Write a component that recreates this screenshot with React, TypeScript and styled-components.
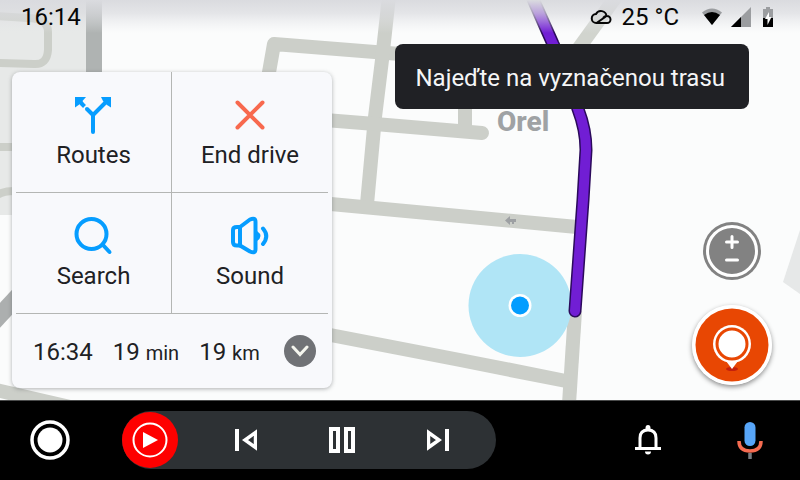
import React from "react";
import styled, { createGlobalStyle } from "styled-components";

const GlobalStyle = createGlobalStyle`
  *, *::before, *::after { box-sizing: border-box; }
  body { margin: 0; background: #000; font-family: Roboto, "Liberation Sans", sans-serif; }
  button { font: inherit; color: inherit; background: none; border: 0; padding: 0; cursor: pointer; }
  svg { display: block; }
`;

const Screen = styled.div`
  min-height: 100vh;
  display: flex;
  flex-direction: column;
`;

const Main = styled.main`
  position: relative;
  isolation: isolate;
  flex: 1;
  display: flex;
  flex-direction: column;
  background: #fbfcfc;
`;

const MapCanvas = styled.svg`
  position: absolute;
  inset: 0;
  width: 100%;
  height: 100%;
  z-index: -1;
`;

const StatusBar = styled.header`
  display: flex;
  align-items: center;
  justify-content: space-between;
  height: 34px;
  padding: 0 27px 0 21px;
  font-size: 24px;
  line-height: 32px;
  color: #060606;
`;

const StatusGroup = styled.div<{ $gap: number }>`
  display: flex;
  align-items: center;
  gap: ${(p) => p.$gap}px;
`;

const Content = styled.div`
  flex: 1;
  display: flex;
  align-items: stretch;
  justify-content: space-between;
  padding: 10px 28px 12px 12px;
`;

const Panel = styled.section`
  flex: 0 0 320px;
  align-self: flex-start;
  margin-top: 28px;
  padding: 0 4px;
  border-radius: 8px;
  background: #f8f9fc;
  color: #202124;
  box-shadow: 0 1px 4px rgba(60, 64, 67, 0.4);
`;

const ActionGrid = styled.div`
  display: grid;
  grid-template-columns: 1fr 1fr;
`;

const Action = styled.button`
  display: flex;
  flex-direction: column;
  align-items: center;
  justify-content: center;
  gap: 6px;
  height: 121px;
  border-bottom: 1px solid #b4b6b4;
  font-size: 24px;
  line-height: 28px;

  &:nth-child(odd) {
    border-right: 1px solid #b4b6b4;
  }
`;

const TripRow = styled.div`
  display: flex;
  align-items: center;
  gap: 20px;
  height: 74px;
  padding: 2px 12px 0 17px;
  font-size: 24px;
  line-height: 28px;
`;

const Unit = styled.span`
  font-size: 20px;
`;

const Collapse = styled.button`
  display: grid;
  place-items: center;
  width: 32px;
  height: 32px;
  margin: 0 0 2px auto;
  border-radius: 50%;
  background: #707276;
`;

const Side = styled.div`
  flex: 1;
  display: flex;
  flex-direction: column;
  align-items: flex-end;
`;

const Toast = styled.div`
  margin-right: 23px;
  padding: 20px 24px 17px 20px;
  border-radius: 8px;
  background: #202125;
  color: #f5f6f7;
  font-size: 24px;
  line-height: 28px;
  white-space: nowrap;
`;

const MapControls = styled.div`
  display: flex;
  flex-direction: column;
  align-items: center;
  gap: 25px;
  margin-top: auto;
  padding-bottom: 3px;
`;

const RoundButton = styled.button<{ $raised?: boolean }>`
  border-radius: 50%;
  box-shadow: ${(p) => (p.$raised ? "0 2px 5px rgba(0, 0, 0, 0.45)" : "none")};
`;

const NavBar = styled.nav`
  display: flex;
  align-items: center;
  height: 80px;
  padding: 0 30px 2px;
  border-top: 1px solid #4a4b4b;
  background: #000;
  color: #fff;
`;

const NavButton = styled.button`
  display: grid;
  place-items: center;
  width: 40px;
  height: 40px;
`;

const MediaPill = styled.div`
  display: flex;
  align-items: center;
  height: 58px;
  margin-left: 52px;
  padding-right: 10px;
  border-radius: 29px;
  background: #2d3134;
`;

const MediaApp = styled.button`
  width: 56px;
  height: 56px;
  margin-right: 20px;
`;

const MediaButton = styled.button`
  display: grid;
  place-items: center;
  width: 96px;
  height: 58px;
`;

const NavEnd = styled.div`
  display: flex;
  gap: 62px;
  margin-left: auto;
`;

function RoadMap() {
  return (
    <MapCanvas viewBox="0 0 800 400" preserveAspectRatio="xMinYMin slice" aria-hidden="true">
      <defs>
        <linearGradient id="shade" x1="0" y1="0" x2="0" y2="1">
          <stop offset="0" stopColor="#dadbdf" />
          <stop offset="0.4" stopColor="#dadbdf" stopOpacity="0.7" />
          <stop offset="1" stopColor="#e6e7ea" stopOpacity="0" />
        </linearGradient>
      </defs>
      <rect width="800" height="400" fill="#fbfcfc" />
      <path d="M0 0H90V215H0Z" fill="#e7e9e8" />
      <path d="M800 230L783 282L800 294Z" fill="#e6e8e8" />
      <g fill="none" stroke="#cccfc9" strokeWidth="14" strokeLinejoin="round">
        <g strokeWidth="8">
          <path d="M-4 16L28 18Q48 18 48 32V50Q47 65 34 64L-4 63" />
          <path d="M-4 147H14M-4 196Q2 191 14 191" />
        </g>
        <path d="M262 112L274 44L400 54L480 61" />
        <path d="M389 -4L382 60L375 117L367 204" />
        <path d="M300 118L375 124L482 133" strokeLinecap="round" />
        <path d="M465 100V130" />
        <path d="M320 203L577 227" />
        <path d="M320 333L460 360L566 381" />
        <path d="M575 311L569 404" />
        <path d="M618 -6L576 52" stroke="#d1d4ce" />
        <path d="M-4 390L70 407" />
      </g>
      <path d="M94 -4V90" stroke="#afb3b2" strokeWidth="16" />
      <path d="M-10 326L30 283" stroke="#acafaf" strokeWidth="17" />
      <path d="M505 220.500L510 216V219H516V222H514V224H512V222H510V225Z" fill="#9da0a3" />
      <text x="497" y="131" fontFamily="Roboto, sans-serif" fontSize="28" fontWeight="800" fill="#9fa2a4">
        Orel
      </text>
      <circle cx="520" cy="305.500" r="51.500" fill="#b0e5f6" />
      <g fill="none" strokeLinecap="round" strokeLinejoin="round">
        <path d="M529 -10L553 44Q570 80 578 109Q586 130 586 150L583 200L575 311" stroke="#2b0a5b" strokeWidth="13" />
        <path d="M529 -10L553 44Q570 80 578 109Q586 130 586 150L583 200L575 311" stroke="#711ed4" strokeWidth="10" />
      </g>
      <circle cx="520" cy="305.500" r="11.500" fill="#fff" />
      <circle cx="520" cy="305.500" r="9" fill="#039dff" />
      <rect width="800" height="33" fill="url(#shade)" />
    </MapCanvas>
  );
}

const RoutesIcon = () => (
  <svg width="40" height="40" viewBox="0 0 40 40" fill="none" stroke="#069dff" strokeWidth="4">
    <path d="M19 37V20L32 7" strokeLinejoin="round" strokeLinecap="round" />
    <path d="M19 20L13 14" strokeLinecap="round" />
    <path d="M10.500 11.500L7 8" />
    <path d="M1 2H12L8.500 6L10 9L8 11L6 9L1 12.500Z" fill="#069dff" stroke="none" />
    <path d="M37 2H27L29 6L33 10L37 12.500Z" fill="#069dff" stroke="none" />
  </svg>
);

const CrossIcon = () => (
  <svg width="40" height="40" viewBox="0 0 40 40" fill="none" stroke="#f8694e" strokeWidth="4" strokeLinecap="round">
    <path d="M7.500 7.500L32.500 32.500M32.500 7.500L7.500 32.500" />
  </svg>
);

const SearchIcon = () => (
  <svg width="40" height="40" viewBox="0 0 40 40" fill="none" stroke="#069dff" strokeWidth="4" strokeLinecap="round">
    <circle cx="17.500" cy="18" r="15" />
    <path d="M29 29L35.500 36" />
  </svg>
);

const SoundIcon = () => (
  <svg width="40" height="40" viewBox="0 0 40 40" fill="none" stroke="#069dff" strokeWidth="4" strokeLinejoin="round" strokeLinecap="round">
    <path d="M10 11H7Q3 11 3 14V26Q3 29.500 7 29.500H10Z" />
    <path d="M10 11L20 3.500Q25.500 1 25.500 6V33Q25.500 38 20 35.500L10 29.500" />
    <path d="M27 15Q34 20 27 25Z" fill="#069dff" stroke="none" />
    <path d="M33 12.500Q39.500 20 33 28" />
  </svg>
);

const CloudIcon = () => (
  <svg width="22" height="16" viewBox="0 0 22 16" fill="none" stroke="#060606" strokeWidth="2">
    <path d="M6.500 14H17A3.500 3.500 0 0 0 17 7Q14 7 13 9.500M16.500 7A5.600 5.600 0 0 0 6 5A4.500 4.500 0 0 0 6.500 14Z" />
  </svg>
);

const WifiIcon = () => (
  <svg width="22" height="18" viewBox="0 0 22 18">
    <path d="M1 4.500Q11-3.500 21 4.500L11 17Z" fill="#9b9da0" />
    <path d="M3 7Q11 1 19 7L11 17Z" fill="#000" />
  </svg>
);

const SignalIcon = () => (
  <svg width="20" height="20" viewBox="0 0 20 20">
    <path d="M20 0V20H0Z" fill="#9b9da0" />
    <path d="M10 10V20H0Z" fill="#000" />
  </svg>
);

const BatteryIcon = () => (
  <svg width="10" height="20" viewBox="0 0 10 20">
    <path d="M3 0H7V2H10V11H0V2H3Z" fill="#9b9da0" />
    <path d="M0 11H10V20H0Z" fill="#000" />
    <path d="M6 5L2 12H4.500V18L8.500 10H6Z" fill="#fff" />
  </svg>
);

export default function App() {
  return (
    <Screen>
      <GlobalStyle />
      <Main>
        <RoadMap />
        <StatusBar>
          <time>16:14</time>
          <StatusGroup $gap={22}>
            <StatusGroup $gap={9}>
              <CloudIcon />
              <span>25 °C</span>
            </StatusGroup>
            <StatusGroup $gap={12}>
              <StatusGroup $gap={8}>
                <WifiIcon />
                <SignalIcon />
              </StatusGroup>
              <BatteryIcon />
            </StatusGroup>
          </StatusGroup>
        </StatusBar>
        <Content>
          <Panel>
            <ActionGrid>
              <Action><RoutesIcon />Routes</Action>
              <Action><CrossIcon />End drive</Action>
              <Action><SearchIcon />Search</Action>
              <Action><SoundIcon />Sound</Action>
            </ActionGrid>
            <TripRow>
              <time>16:34</time>
              <span>19 <Unit>min</Unit></span>
              <span>19 <Unit>km</Unit></span>
              <Collapse aria-label="Collapse">
                <svg width="18" height="12" viewBox="0 0 18 12" fill="none" stroke="#f4f5ee" strokeWidth="3" strokeLinecap="round">
                  <path d="M2 2L9 9.500L16 2" />
                </svg>
              </Collapse>
            </TripRow>
          </Panel>
          <Side>
            <Toast role="status">Najeďte na vyznačenou trasu</Toast>
            <MapControls>
              <RoundButton aria-label="Zoom">
                <svg width="58" height="58" viewBox="0 0 58 58">
                  <circle cx="29" cy="29" r="29" fill="#828282" />
                  <circle cx="29" cy="29" r="24.500" fill="none" stroke="#fff" strokeWidth="3" />
                  <path d="M23.500 20H34.500M29 14.500V25.500M23.500 38H34.500" stroke="#fff" strokeWidth="3" strokeLinecap="round" />
                </svg>
              </RoundButton>
              <RoundButton $raised aria-label="Report">
                <svg width="80" height="80" viewBox="0 0 80 80">
                  <circle cx="40" cy="40" r="40" fill="#fff" />
                  <circle cx="40" cy="40" r="36.500" fill="#e84703" />
                  <ellipse cx="40" cy="64" rx="6" ry="2" fill="#c4200c" />
                  <path d="M34 56L40 64L46 56Z" fill="#fff" />
                  <circle cx="40" cy="39" r="19" fill="#fff" />
                  <circle cx="40" cy="39" r="15" fill="none" stroke="#e84703" strokeWidth="3" />
                </svg>
              </RoundButton>
            </MapControls>
          </Side>
        </Content>
      </Main>
      <NavBar>
        <NavButton aria-label="Home">
          <svg width="40" height="40" viewBox="0 0 40 40" fill="#fff">
            <circle cx="20" cy="20" r="18" fill="none" stroke="#fff" strokeWidth="3.500" />
            <circle cx="20" cy="20" r="12.500" />
          </svg>
        </NavButton>
        <MediaPill>
          <MediaApp aria-label="YouTube Music">
            <svg width="56" height="56" viewBox="0 0 56 56">
              <circle cx="28" cy="28" r="28" fill="#fe0000" />
              <circle cx="28" cy="28" r="16.500" fill="none" stroke="#fff" strokeWidth="2" />
              <path d="M21 20L36 28L21 36Z" fill="#fff" />
            </svg>
          </MediaApp>
          <MediaButton aria-label="Previous">
            <svg width="22" height="22" viewBox="0 0 22 22" fill="none" stroke="#fff" strokeWidth="3.500">
              <path d="M2 0V22" strokeWidth="4" />
              <path d="M20.500 3.500V18.500L10 11Z" />
            </svg>
          </MediaButton>
          <MediaButton aria-label="Pause">
            <svg width="26" height="26" viewBox="0 0 26 26" fill="none" stroke="#fff" strokeWidth="4">
              <path d="M2 2H9V24H2ZM17 2H24V24H17Z" />
            </svg>
          </MediaButton>
          <MediaButton aria-label="Next">
            <svg width="22" height="22" viewBox="0 0 22 22" fill="none" stroke="#fff" strokeWidth="3.500">
              <path d="M20 0V22" strokeWidth="4" />
              <path d="M1.500 3.500V18.500L12 11Z" />
            </svg>
          </MediaButton>
        </MediaPill>
        <NavEnd>
          <NavButton aria-label="Notifications">
            <svg width="26" height="30" viewBox="0 0 26 30" fill="#fff">
              <path d="M5 24V13Q5 5 13 5Q21 5 21 13V24" fill="none" stroke="#fff" strokeWidth="3" />
              <path d="M10.500 5V3Q10.500 0 13 0T15.500 3V5ZM0 22H26V25H0ZM10 26.500H16Q16 29.500 13 29.500T10 26.500Z" />
            </svg>
          </NavButton>
          <NavButton aria-label="Voice assistant">
            <svg width="26" height="38" viewBox="0 0 26 38">
              <rect x="7.500" y="1" width="11" height="24" rx="5.500" fill="#57a5f8" />
              <path d="M2 20Q2 30 13 30T24 20" fill="none" stroke="#f56b50" strokeWidth="3.500" />
              <path d="M13 32V38" stroke="#777b80" strokeWidth="3.500" />
            </svg>
          </NavButton>
        </NavEnd>
      </NavBar>
    </Screen>
  );
}
